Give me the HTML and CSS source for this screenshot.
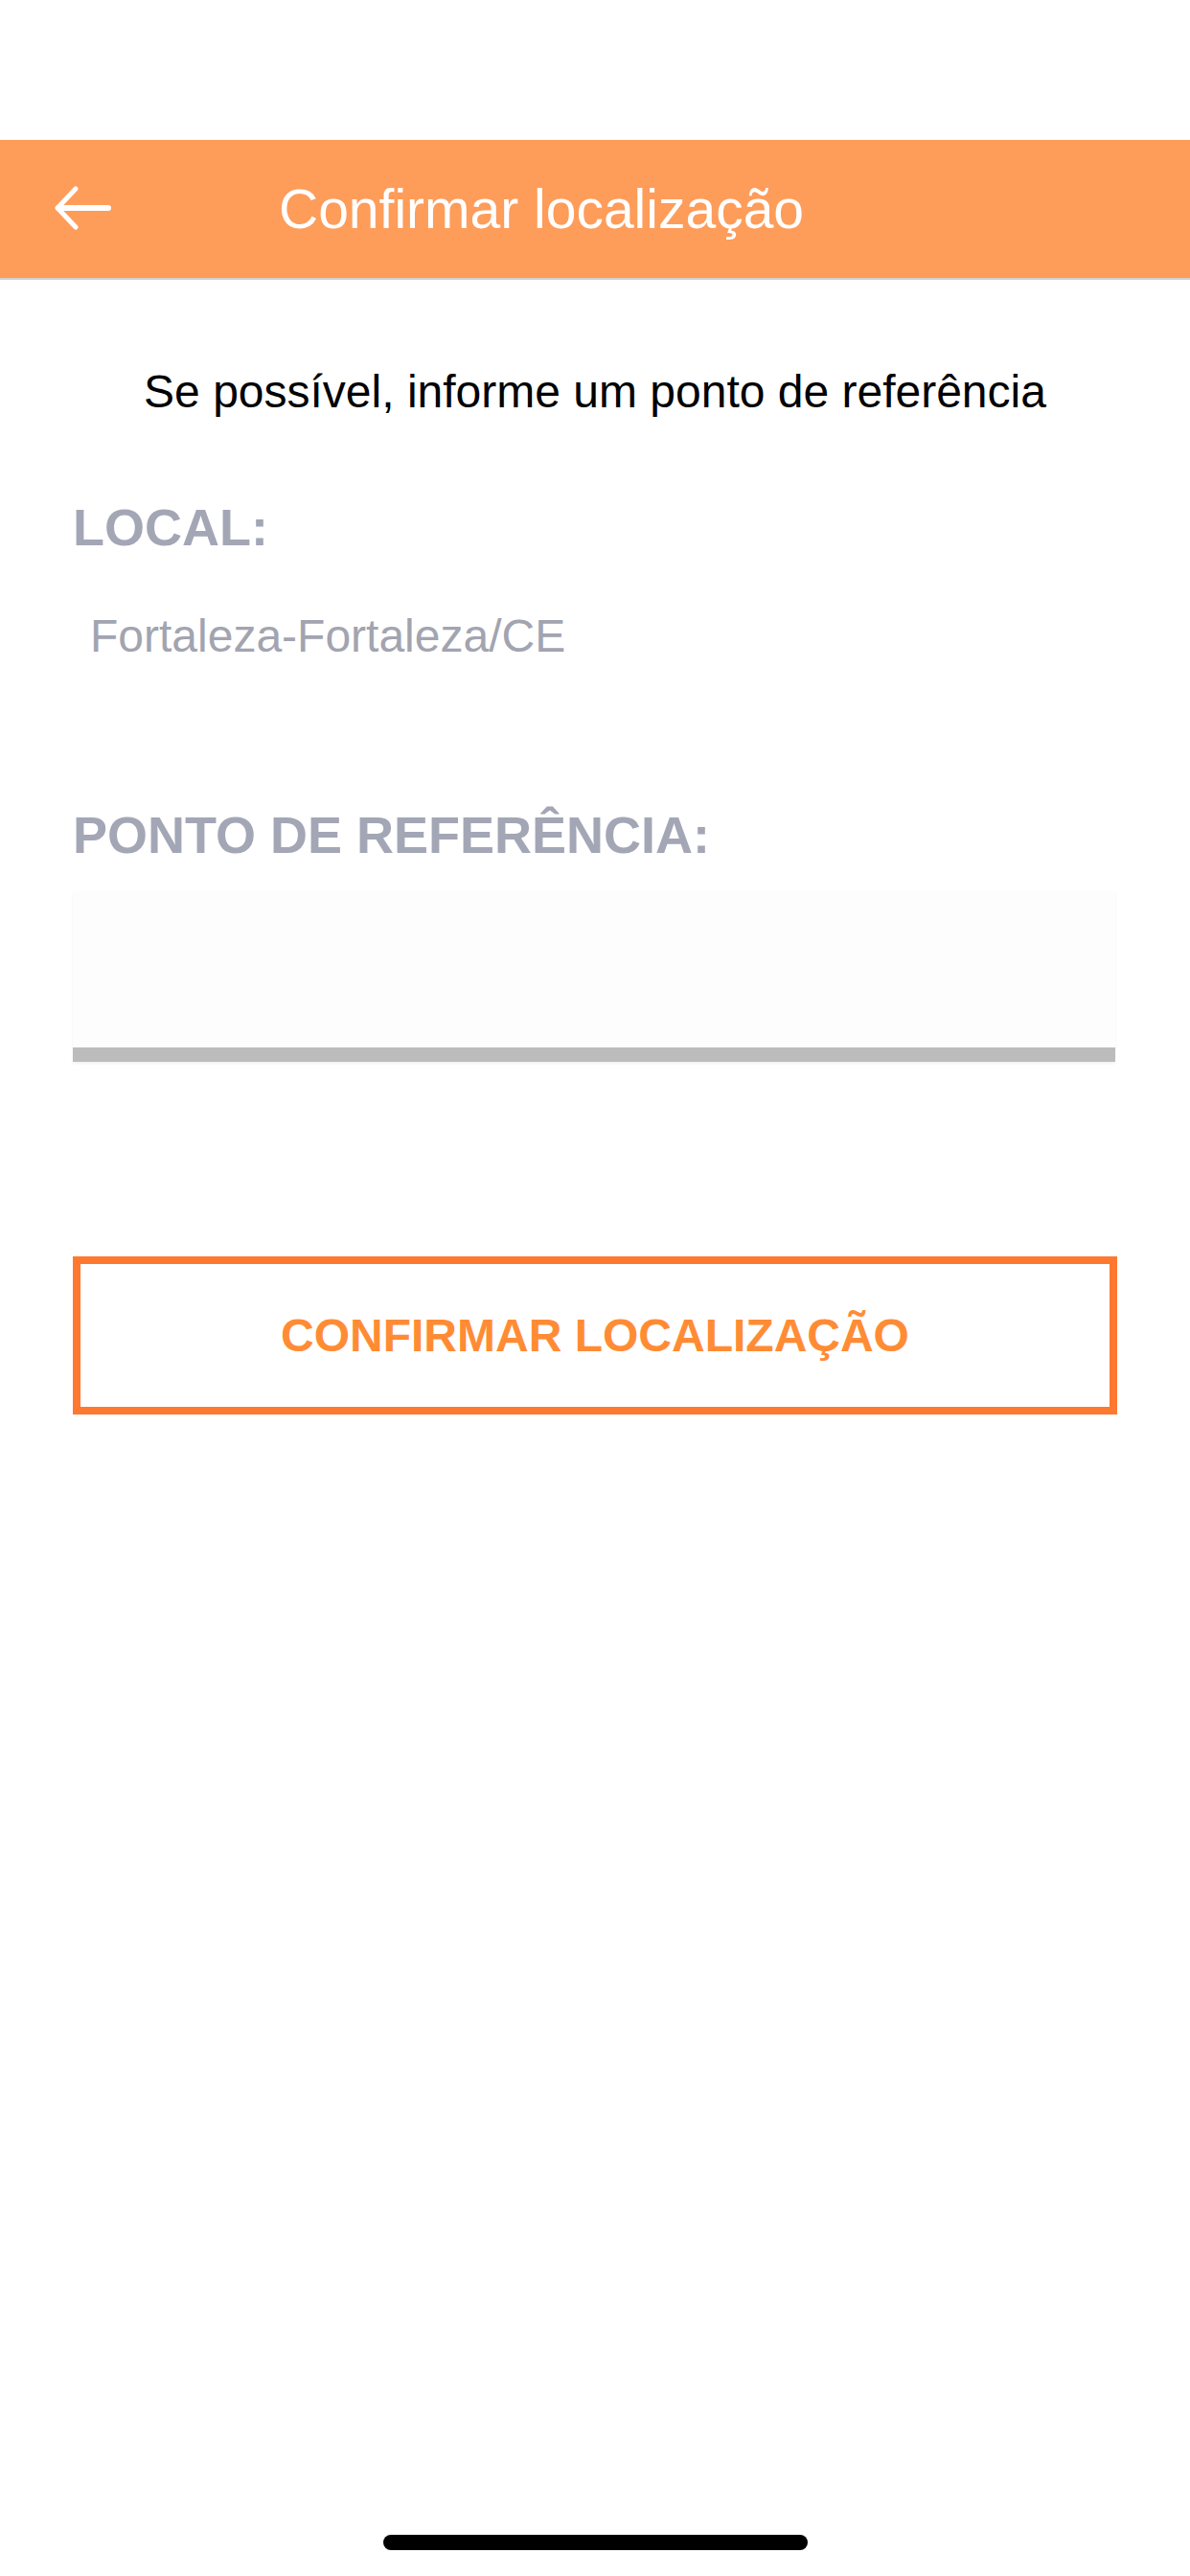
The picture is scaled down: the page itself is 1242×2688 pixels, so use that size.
FILE: index.html
```html
<!DOCTYPE html>
<html lang="pt-BR">
<head>
  <meta charset="UTF-8" />
  <meta name="viewport" content="width=device-width, initial-scale=1.0"/>
  <title>Confirmar localização</title>
  <link rel="stylesheet" href="styles.css">
</head>
<body>
  <div class="status-bar"></div>

  <header class="app-bar">
    <button class="back-btn" aria-label="Voltar">
      <svg width="62" height="46" viewBox="0 0 62 46">
        <path d="M25 3 L6 23 L25 43" fill="none" stroke="#fff" stroke-width="5" stroke-linecap="round" stroke-linejoin="round"/>
        <path d="M7 23 H59" stroke="#fff" stroke-width="6" stroke-linecap="round"/>
      </svg>
    </button>
    <h1 class="app-title">Confirmar localização</h1>
  </header>

  <main class="content">
    <p class="intro">Se possível, informe um ponto de referência</p>

    <div class="field">
      <div class="label">LOCAL:</div>
      <div class="value">Fortaleza-Fortaleza/CE</div>
    </div>

    <div class="field field-ref">
      <div class="label">PONTO DE REFERÊNCIA:</div>
      <input type="text" class="ref-input" />
    </div>

    <button class="confirm-btn">CONFIRMAR LOCALIZAÇÃO</button>
  </main>

  <div class="home-indicator"></div>
</body>
</html>
```

FILE: styles.css
```css
:root {
  --orange: #fe9c5a;
  --orange-strong: #ff7830;
  --orange-text: #ff8c35;
  --label: #a3a6b5;
  --muted: #a2a4b0;
}

body {
  margin: 0;
  width: 1242px;
  height: 2688px;
  background: #fff;
  font-family: 'Liberation Sans', Arial, sans-serif;
  position: relative;
  overflow: hidden;
}

.status-bar {
  height: 146px;
}

.app-bar {
  height: 144px;
  background: var(--orange);
  border-bottom: 2px solid #d4cfcb;
  display: flex;
  align-items: center;
  padding-left: 54px;
}

.back-btn {
  background: none;
  border: none;
  padding: 0;
  display: flex;
  margin-top: -2px;
}

.app-title {
  margin: 0 0 0 175px;
  color: #fff;
  font-size: 57px;
  font-weight: normal;
  line-height: 64px;
}

.content {
  padding: 0 76px;
}

.intro {
  margin: 89px 0 0;
  text-align: center;
  font-size: 48px;
  line-height: 56px;
  color: #000;
}

.label {
  color: var(--label);
  font-size: 54px;
  font-weight: bold;
  line-height: 64px;
}

.field {
  margin-top: 81px;
}

.value {
  margin-top: 54px;
  padding-left: 18px;
  color: var(--muted);
  font-size: 48px;
  line-height: 56px;
}

.field-ref {
  margin-top: 147px;
}

.ref-input {
  display: block;
  box-sizing: border-box;
  width: 1088px;
  height: 178px;
  margin-top: 27px;
  border: none;
  border-bottom: 15px solid #bcbcbc;
  background: #fdfdfd;
  box-shadow: 0 2px 3px rgba(0, 0, 0, 0.06);
  outline: none;
}

.confirm-btn {
  display: block;
  box-sizing: border-box;
  width: 1090px;
  height: 165px;
  margin-top: 203px;
  background: #fff;
  border: 8px solid var(--orange-strong);
  color: var(--orange-text);
  font-family: 'Liberation Sans', Arial, sans-serif;
  font-size: 48px;
  font-weight: bold;
  cursor: pointer;
}

.home-indicator {
  position: absolute;
  left: 400px;
  top: 2645px;
  width: 443px;
  height: 16px;
  border-radius: 8px;
  background: #000;
}
```
